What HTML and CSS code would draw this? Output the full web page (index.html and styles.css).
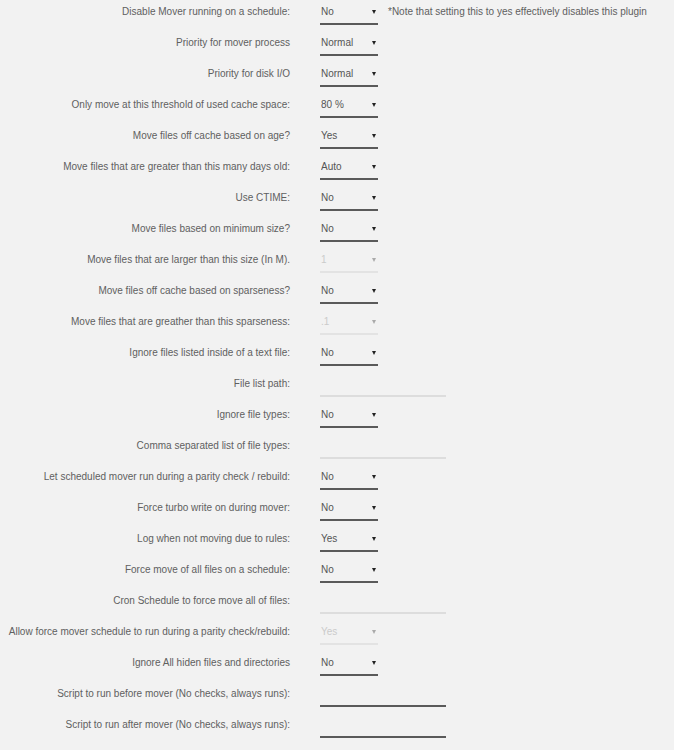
FILE: index.html
```html
<!DOCTYPE html>
<html lang="en">
<head>
    <meta charset="UTF-8">
    <meta name="viewport" content="width=device-width, initial-scale=1.0">
    <title>Mover Tuning</title>
    <link rel="stylesheet" href="styles.css">
</head>
<body>
    <form class="settings">
        <div class="row">
            <label>Disable Mover running on a schedule:</label>
            <div class="field">
                <span class="select"><select><option>No</option><option>Yes</option></select></span>
                <span class="note">*Note that setting this to yes effectively disables this plugin</span>
            </div>
        </div>
        <div class="row">
            <label>Priority for mover process</label>
            <span class="select"><select><option>Normal</option></select></span>
        </div>
        <div class="row">
            <label>Priority for disk I/O</label>
            <span class="select"><select><option>Normal</option></select></span>
        </div>
        <div class="row">
            <label>Only move at this threshold of used cache space:</label>
            <span class="select"><select><option>80 %</option></select></span>
        </div>
        <div class="row">
            <label>Move files off cache based on age?</label>
            <span class="select"><select><option>Yes</option></select></span>
        </div>
        <div class="row">
            <label>Move files that are greater than this many days old:</label>
            <span class="select"><select><option>Auto</option></select></span>
        </div>
        <div class="row">
            <label>Use CTIME:</label>
            <span class="select"><select><option>No</option></select></span>
        </div>
        <div class="row">
            <label>Move files based on minimum size?</label>
            <span class="select"><select><option>No</option></select></span>
        </div>
        <div class="row">
            <label>Move files that are larger than this size (In M).</label>
            <span class="select"><select disabled><option>1</option></select></span>
        </div>
        <div class="row">
            <label>Move files off cache based on sparseness?</label>
            <span class="select"><select><option>No</option></select></span>
        </div>
        <div class="row">
            <label>Move files that are greather than this sparseness:</label>
            <span class="select"><select disabled><option>.1</option></select></span>
        </div>
        <div class="row">
            <label>Ignore files listed inside of a text file:</label>
            <span class="select"><select><option>No</option></select></span>
        </div>
        <div class="row">
            <label>File list path:</label>
            <input type="text" class="text" disabled>
        </div>
        <div class="row">
            <label>Ignore file types:</label>
            <span class="select"><select><option>No</option></select></span>
        </div>
        <div class="row">
            <label>Comma separated list of file types:</label>
            <input type="text" class="text" disabled>
        </div>
        <div class="row">
            <label>Let scheduled mover run during a parity check / rebuild:</label>
            <span class="select"><select><option>No</option></select></span>
        </div>
        <div class="row">
            <label>Force turbo write on during mover:</label>
            <span class="select"><select><option>No</option></select></span>
        </div>
        <div class="row">
            <label>Log when not moving due to rules:</label>
            <span class="select"><select><option>Yes</option></select></span>
        </div>
        <div class="row">
            <label>Force move of all files on a schedule:</label>
            <span class="select"><select><option>No</option></select></span>
        </div>
        <div class="row">
            <label>Cron Schedule to force move all of files:</label>
            <input type="text" class="text" disabled>
        </div>
        <div class="row">
            <label>Allow force mover schedule to run during a parity check/rebuild:</label>
            <span class="select"><select disabled><option>Yes</option></select></span>
        </div>
        <div class="row">
            <label>Ignore All hiden files and directories</label>
            <span class="select"><select><option>No</option></select></span>
        </div>
        <div class="row">
            <label>Script to run before mover (No checks, always runs):</label>
            <input type="text" class="text">
        </div>
        <div class="row">
            <label>Script to run after mover (No checks, always runs):</label>
            <input type="text" class="text">
        </div>
    </form>
</body>
</html>
```
FILE: styles.css
```css
body {
    margin: 0;
    background: #f2f2f2;
    font-family: "Liberation Sans", Arial, sans-serif;
    font-size: 10px;
    color: #606060;
}
.row {
    display: flex;
    align-items: flex-start;
    gap: 30px;
    height: 31px;
}
.row label {
    flex: 0 0 290px;
    text-align: right;
    line-height: 24px;
}
.field {
    display: flex;
    align-items: flex-start;
    gap: 10px;
}
.note {
    line-height: 24px;
    white-space: nowrap;
}
.select {
    position: relative;
    display: block;
    width: 58px;
}
.select::after {
    content: "";
    position: absolute;
    right: 2px;
    top: 10px;
    border-left: 2.5px solid transparent;
    border-right: 2.5px solid transparent;
    border-top: 4px solid #222;
    pointer-events: none;
}
.select select {
    appearance: none;
    -webkit-appearance: none;
    display: block;
    width: 100%;
    height: 25px;
    margin: 0;
    padding: 0 0 0 1px;
    border: none;
    border-bottom: 2px solid #5a5a5a;
    border-radius: 0;
    background: transparent;
    font: inherit;
    color: #555;
    line-height: 23px;
}
.select select:disabled {
    color: #bbb;
    border-bottom-color: #ddd;
}
.select:has(select:disabled)::after {
    border-top-color: #aaa;
}
.text {
    display: block;
    width: 126px;
    height: 25px;
    margin: 0;
    padding: 0;
    border: none;
    border-bottom: 2px solid #5a5a5a;
    background: transparent;
    font: inherit;
    box-sizing: border-box;
}
.text:disabled {
    border-bottom-color: #ddd;
}
```
